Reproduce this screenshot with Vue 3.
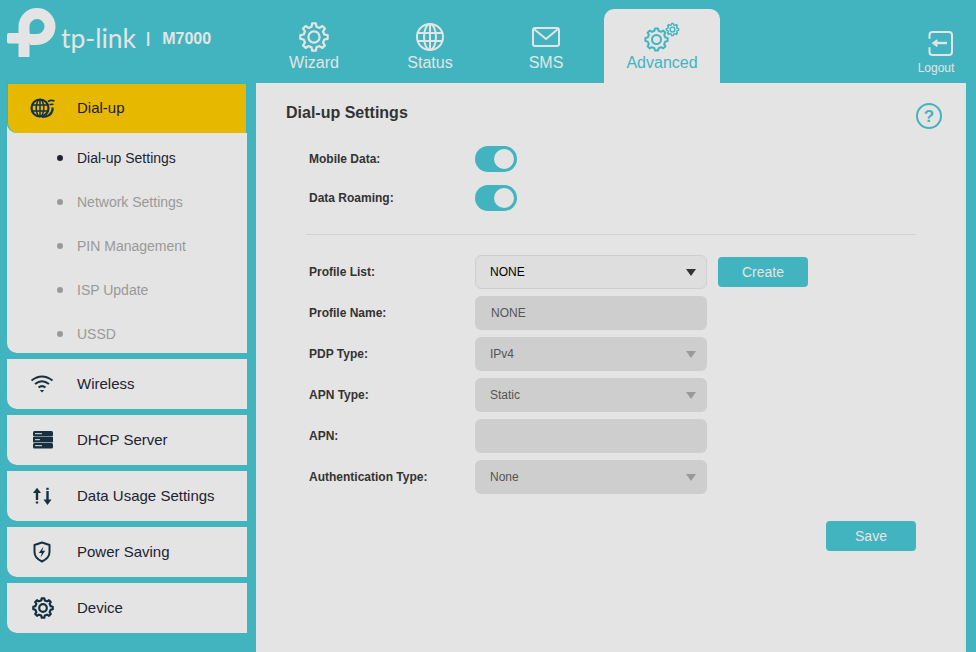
<script setup>
const subItems = [
  { label: 'Dial-up Settings', active: true },
  { label: 'Network Settings' },
  { label: 'PIN Management' },
  { label: 'ISP Update' },
  { label: 'USSD' }
]

const menuItems = ['Wireless', 'DHCP Server', 'Data Usage Settings', 'Power Saving', 'Device']

const fields = [
  { label: 'Profile Name:', kind: 'input', value: 'NONE' },
  { label: 'PDP Type:', kind: 'select', value: 'IPv4' },
  { label: 'APN Type:', kind: 'select', value: 'Static' },
  { label: 'APN:', kind: 'input', value: '' },
  { label: 'Authentication Type:', kind: 'select', value: 'None' }
]

// outline of a cog wheel, n teeth between radius r1 and r2
function gear(cx, cy, r1, r2, n = 8) {
  const pts = []
  const step = (Math.PI * 2) / n
  for (let i = 0; i < n; i++) {
    const a = i * step - Math.PI / 2
    const list = [
      [r1, a - step * 0.3],
      [r2, a - step * 0.17],
      [r2, a + step * 0.17],
      [r1, a + step * 0.3]
    ]
    for (const [r, t] of list) {
      pts.push((cx + r * Math.cos(t)).toFixed(2) + ' ' + (cy + r * Math.sin(t)).toFixed(2))
    }
  }
  return 'M' + pts.join('L') + 'Z'
}
</script>

<template>
  <div class="page">
    <header class="top">
      <div class="brand">
        <svg class="logo" width="56" height="64" viewBox="0 0 56 64">
          <path d="M24 57V26.500A13 13 0 1 1 37 39.500H30" fill="none" stroke="#e4e4e4" stroke-width="11" />
          <path d="M9 33H30V43.500H9Q7 43.500 7 41.500V35Q7 33 9 33Z" fill="#e4e4e4" />
        </svg>
        <span class="wordmark">tp-link</span>
        <span class="sep">|</span>
        <span class="model">M7000</span>
      </div>

      <nav class="tabs">
        <a class="tab">
          <svg width="32" height="32" viewBox="0 0 32 32" fill="none" stroke="#e4e4e4" stroke-width="2.200">
            <path :d="gear(16, 16, 10.600, 13.800)" stroke-linejoin="round" />
            <circle cx="16" cy="16" r="5.600" />
          </svg>
          <span>Wizard</span>
        </a>
        <a class="tab">
          <svg width="32" height="32" viewBox="0 0 32 32" fill="none" stroke="#e4e4e4" stroke-width="2">
            <circle cx="16" cy="16" r="13" />
            <ellipse cx="16" cy="16" rx="6" ry="13" />
            <path d="M16 3V29M3.500 12H28.500M3.500 20H28.500" />
          </svg>
          <span>Status</span>
        </a>
        <a class="tab">
          <svg width="32" height="32" viewBox="0 0 32 32" fill="none" stroke="#e4e4e4" stroke-width="2">
            <rect x="3" y="7" width="26" height="18" rx="2" />
            <path d="M4 8L16 18L28 8" />
          </svg>
          <span>SMS</span>
        </a>
        <a class="tab current">
          <svg width="44" height="32" viewBox="0 0 44 32" fill="none" stroke="#42b4bf">
            <path :d="gear(16.500, 18.500, 9, 11.200)" stroke-width="2" stroke-linejoin="round" />
            <circle cx="16.500" cy="18.500" r="4.500" stroke-width="2" />
            <path :d="gear(32.500, 8.500, 4.800, 6.200)" stroke-width="1.400" stroke-linejoin="round" />
            <circle cx="32.500" cy="8.500" r="2.400" stroke-width="1.400" />
          </svg>
          <span>Advanced</span>
        </a>
      </nav>

      <a class="logout">
        <svg width="26" height="28" viewBox="0 0 26 28" fill="none" stroke="#e4e4e4" stroke-width="2" stroke-linecap="round">
          <path d="M1.500 8V5Q1.500 2 4.500 2H21Q24 2 24 5V22Q24 25 21 25H4.500Q1.500 25 1.500 22V18" />
          <path d="M9 13H19" stroke-width="2.400" stroke-linecap="butt" />
          <path d="M4.500 13L9 9.800V16.200Z" fill="#e4e4e4" stroke-width="1" stroke-linejoin="round" />
        </svg>
        <span>Logout</span>
      </a>
    </header>

    <div class="body">
      <aside class="side">
        <div class="group">
          <div class="group-head">
            <span class="ico">
              <svg width="26" height="24" viewBox="0 0 26 24" fill="none" stroke="#14304a" stroke-width="1.500">
                <circle cx="11" cy="12" r="8.500" stroke-width="2.200" />
                <ellipse cx="11" cy="12" rx="3.800" ry="8.500" />
                <path d="M3 9H19M3 15H19M11 3.500V20.500" />
                <path d="M19 5.500Q22 3.600 25.500 5" stroke-width="1.600" />
                <path d="M20.500 8.800Q22.500 7.800 24.500 8.600" stroke-width="1.600" />
                <path d="M23.500 11.500V14Q22 20.800 13 21" stroke-width="2.200" />
              </svg>
            </span>
            <span class="name">Dial-up</span>
          </div>
          <ul class="subs">
            <li v-for="s in subItems" :key="s.label" class="sub" :class="{ on: s.active }">
              <i class="dot"></i>{{ s.label }}
            </li>
          </ul>
        </div>

        <div v-for="(m, i) in menuItems" :key="m" class="menu">
          <span class="ico">
            <svg v-if="i === 0" width="24" height="20" viewBox="0 0 24 20" fill="none" stroke="#16303f" stroke-width="2">
              <path d="M1.500 6.500Q12 -1.500 22.500 6.500M5 10Q12 4.500 19 10M8.500 13.500Q12 10.800 15.500 13.500" />
              <path d="M9.800 16L12 18.500L14.200 16Z" fill="#16303f" stroke="none" />
            </svg>
            <svg v-else-if="i === 1" width="24" height="20" viewBox="0 0 24 20">
              <rect x="3" y="1" width="20" height="5.400" rx="1.500" fill="#16303f" />
              <rect x="3" y="7" width="20" height="5.400" fill="#16303f" />
              <rect x="3" y="13" width="20" height="5.400" rx="1.500" fill="#16303f" />
              <path d="M5 3.700H12M5 9.700H10M5 15.700H12" stroke="#e4e4e4" stroke-width="1" />
            </svg>
            <svg v-else-if="i === 2" width="24" height="20" viewBox="0 0 24 20" fill="#16303f" stroke="none">
              <path d="M3 7L7 1.800L11 7Z" />
              <rect x="5.800" y="7" width="2.400" height="7" />
              <rect x="5.800" y="15.500" width="2.400" height="2" />
              <rect x="16.300" y="1.800" width="2.400" height="2" />
              <rect x="16.300" y="5" width="2.400" height="9" />
              <path d="M13.500 13.500H21.500L17.500 19Z" />
            </svg>
            <svg v-else-if="i === 3" width="24" height="22" viewBox="0 0 24 22" fill="none" stroke="#16303f" stroke-width="2">
              <path d="M12 1.500L19.500 4V11Q19.500 17 12 20.500Q4.500 17 4.500 11V4Z" stroke-linejoin="round" />
              <path d="M13.500 5.500L8.800 12H11.800L10.500 16.500L15.200 9.800H12.200Z" fill="#16303f" stroke="none" />
            </svg>
            <svg v-else width="24" height="24" viewBox="0 0 24 24" fill="none" stroke="#16303f" stroke-width="2.200">
              <path :d="gear(13, 12, 7.800, 9.800)" stroke-linejoin="round" />
              <circle cx="13" cy="12" r="3.800" />
            </svg>
          </span>
          <span class="name">{{ m }}</span>
        </div>
      </aside>

      <main class="content">
        <div class="title-row">
          <h1 class="title">Dial-up Settings</h1>
          <svg width="28" height="28" viewBox="0 0 28 28" fill="none">
            <circle cx="14" cy="14" r="12" stroke="#42b4bf" stroke-width="2" />
            <text x="14" y="20" text-anchor="middle" class="q">?</text>
          </svg>
        </div>

        <form class="form" @submit.prevent>
          <div class="switches">
            <div class="row switch-row">
              <label class="lab">Mobile Data:</label>
              <span class="toggle"><i></i></span>
            </div>
            <div class="row switch-row">
              <label class="lab">Data Roaming:</label>
              <span class="toggle"><i></i></span>
            </div>
          </div>

          <hr class="rule" />

          <div class="fields">
            <div class="row">
              <label class="lab">Profile List:</label>
              <div class="ctl select live">
                <span>NONE</span><i class="arrow"></i>
              </div>
              <button type="button" class="btn create">Create</button>
            </div>
            <div v-for="f in fields" :key="f.label" class="row">
              <label class="lab">{{ f.label }}</label>
              <div class="ctl" :class="f.kind">
                <span>{{ f.value }}</span>
                <i v-if="f.kind === 'select'" class="arrow"></i>
              </div>
            </div>
          </div>

          <div class="actions">
            <button type="button" class="btn">Save</button>
          </div>
        </form>
      </main>
    </div>
  </div>
</template>

<style>
html,
body {
  margin: 0;
  background: #42b4bf;
}
</style>

<style scoped>
.page {
  width: 976px;
  height: 652px;
  overflow: hidden;
  background: #42b4bf;
  font-family: "Liberation Sans", Arial, sans-serif;
  color: #333;
}

.top {
  display: flex;
  height: 83px;
}

.brand {
  width: 256px;
  flex: none;
  display: flex;
  align-items: flex-start;
  color: #e4e4e4;
}

.logo {
  flex: none;
  margin-right: 5px;
}

.wordmark {
  font-family: Lato, sans-serif;
  font-weight: 400;
  font-size: 26.5px;
  line-height: 32px;
  margin-top: 22px;
  width: 75px;
  white-space: nowrap;
}

.sep {
  font-size: 15px;
  font-weight: bold;
  line-height: 20px;
  margin: 28px 0 0 10px;
}

.model {
  font-size: 16px;
  font-weight: bold;
  line-height: 20px;
  margin: 29px 0 0 12px;
}

.tabs {
  display: flex;
  padding-top: 9px;
}

.tab {
  width: 116px;
  height: 74px;
  display: flex;
  flex-direction: column;
  align-items: center;
  padding-top: 12px;
  box-sizing: border-box;
  color: #e4e4e4;
  font-size: 16px;
  line-height: 20px;
}

.tab svg {
  display: block;
}

.tab.current {
  background: #e4e4e4;
  color: #42b4bf;
  border-radius: 10px 10px 0 0;
}

.logout {
  margin-left: auto;
  width: 60px;
  margin-right: 10px;
  display: flex;
  flex-direction: column;
  align-items: center;
  padding-top: 30px;
  color: #e4e4e4;
  font-size: 12px;
  line-height: 14px;
}

.logout svg {
  display: block;
  margin-left: 10px;
}

.logout span {
  margin-top: 3px;
}

.body {
  display: flex;
  height: 569px;
  padding: 0 10px 0 7px;
}

.side {
  width: 240px;
  flex: none;
  display: flex;
  flex-direction: column;
  gap: 6px;
  margin-right: 9px;
}

.group,
.menu {
  background: #e4e4e4;
  border-bottom-left-radius: 10px;
  font-size: 15px;
}

.group-head,
.menu {
  height: 50px;
  display: flex;
  align-items: center;
  color: #223;
}

.group-head {
  background: #e6b800;
  border-bottom-left-radius: 10px;
  color: #1b1b2b;
  box-shadow: inset 0 1px 0 #2cb9c6, inset 1px 0 0 #2cb9c6, inset -1px 0 0 #2cb9c6;
}

.name {
  margin-bottom: 2px;
}

.ico {
  width: 70px;
  flex: none;
  display: flex;
  justify-content: center;
}

.ico svg {
  display: block;
}

.subs {
  list-style: none;
  margin: 0;
  padding: 3px 0 0;
  height: 220px;
  box-sizing: border-box;
  font-size: 14px;
}

.sub {
  height: 44px;
  display: flex;
  align-items: center;
  color: #999;
}

.sub.on {
  color: #223;
}

.dot {
  width: 6px;
  height: 6px;
  border-radius: 50%;
  background: #999;
  margin: 0 14px 0 50px;
}

.sub.on .dot {
  background: #223;
}

.content {
  flex: 1;
  background: #e4e4e4;
  padding-top: 19px;
  box-sizing: border-box;
}

.title-row {
  display: flex;
  justify-content: space-between;
  align-items: flex-start;
  height: 28px;
  padding: 0 23px 0 30px;
}

.title {
  margin: 0;
  font-size: 16px;
  line-height: 21px;
  font-weight: bold;
  color: #333;
}

.q {
  font-family: "Liberation Sans", Arial, sans-serif;
  font-size: 17px;
  font-weight: bold;
  fill: #42b4bf;
}

.form {
  padding: 16px 50px 0 50px;
}

.switches {
  display: flex;
  flex-direction: column;
  gap: 13px;
}

.row {
  display: flex;
  align-items: center;
  height: 34px;
  padding-left: 3px;
}

.switch-row {
  height: 26px;
}

.lab {
  width: 166px;
  flex: none;
  font-size: 12px;
  font-weight: bold;
  color: #333;
}

.toggle {
  width: 42px;
  height: 26px;
  border-radius: 13px;
  background: #42b4bf;
  display: flex;
  align-items: center;
  justify-content: flex-end;
  padding-right: 3px;
  box-sizing: border-box;
}

.toggle i {
  width: 20px;
  height: 20px;
  border-radius: 50%;
  background: #e4e4e4;
}

.rule {
  border: 0;
  height: 1px;
  background: #d2d2d2;
  margin: 23px 0 20px;
}

.fields {
  display: flex;
  flex-direction: column;
  gap: 7px;
}

.ctl {
  width: 232px;
  height: 34px;
  box-sizing: border-box;
  border-radius: 6px;
  background: #cecece;
  display: flex;
  align-items: center;
  justify-content: space-between;
  font-size: 12px;
  color: #555;
  padding: 0 11px 0 15px;
}

.ctl.input {
  padding-left: 16px;
}

.ctl.live {
  background: #dedede;
  border: 1px solid #cfcfcf;
  color: #000;
  padding: 0 10px 0 14px;
}

.arrow {
  width: 0;
  height: 0;
  border-left: 5px solid transparent;
  border-right: 5px solid transparent;
  border-top: 7px solid #999;
}

.ctl.live .arrow {
  border-top-color: #333;
}

.btn {
  width: 90px;
  height: 30px;
  border: 0;
  border-radius: 4px;
  background: #42b4bf;
  color: #e4e4e4;
  font-family: inherit;
  font-size: 14px;
  padding: 0;
}

.create {
  margin-left: 11px;
}

.actions {
  display: flex;
  justify-content: flex-end;
  margin-top: 27px;
}
</style>
